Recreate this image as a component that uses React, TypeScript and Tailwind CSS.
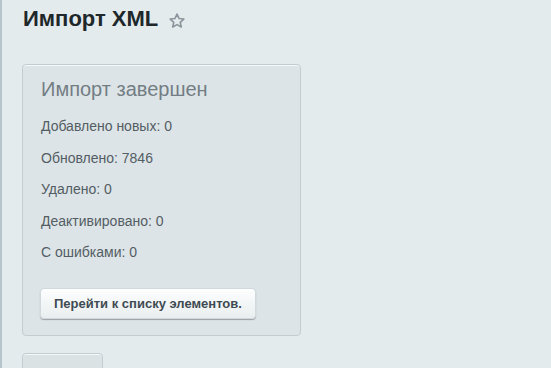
const stats = [
  { label: "Добавлено новых", value: 0 },
  { label: "Обновлено", value: 7846 },
  { label: "Удалено", value: 0 },
  { label: "Деактивировано", value: 0 },
  { label: "С ошибками", value: 0 },
];

function StarIcon() {
  return (
    <svg width="18" height="18" viewBox="0 0 24 24" className="ml-[10px] mt-[3px]">
      <path
        d="M12 2.8l2.7 5.9 6.4.7-4.8 4.3 1.4 6.3L12 16.8 6.3 20l1.4-6.3-4.8-4.3 6.4-.7z"
        fill="none"
        stroke="#8a959c"
        strokeWidth="2.2"
        strokeLinejoin="round"
      />
    </svg>
  );
}

export default function App() {
  return (
    <div
      className="w-[551px] h-[368px] overflow-hidden bg-[#e4ebed] border-l-2 border-[#b8c4cb] font-['Liberation_Sans',Arial,sans-serif]"
    >
      <div className="pl-[20px] pt-[4px]">
        <div className="flex items-center h-[30px] ml-[1px]">
          <h1 className="text-[22px] font-bold text-[#20272b] leading-none">Импорт XML</h1>
          <StarIcon />
        </div>

        <div className="mt-[30px] w-[279px] h-[272px] rounded-[4px] border border-[#c3ccd1] bg-[#dde4e7] shadow-[inset_0_1px_0_#f5f8f9] px-[18px] pt-[12px]">
          <h2 className="text-[20px] text-[#737d84] leading-[24px]">Импорт завершен</h2>
          <div className="mt-[17px] flex flex-col gap-[15.5px]">
            {stats.map((s) => (
              <p key={s.label} className="text-[14px] text-[#535d64] leading-[16px]">
                {s.label}: {s.value}
              </p>
            ))}
          </div>
          <button className="mt-[28px] -ml-[1px] h-[31px] px-[13px] rounded-[4px] bg-gradient-to-b from-[#fdfefe] to-[#e9eef0] border border-[#d2d9dc] shadow-[0_1px_1px_rgba(0,0,0,0.3)] text-[13px] font-bold text-[#3f4b52]">
            Перейти к списку элементов.
          </button>
        </div>

        <div className="mt-[17px] w-[81px] h-[30px] rounded-t-[4px] border border-[#c3ccd1] bg-[#dae2e4] shadow-[inset_0_1px_0_#f5f8f9]" />
      </div>
    </div>
  );
}
